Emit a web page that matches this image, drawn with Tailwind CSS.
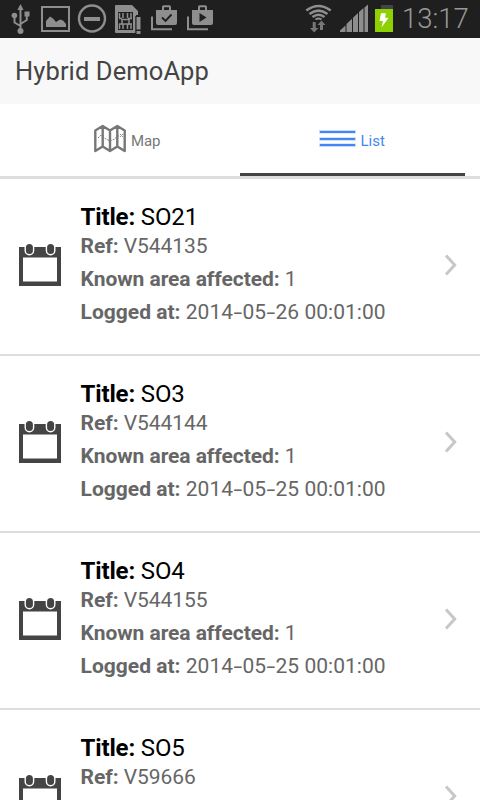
<!DOCTYPE html>
<html lang="en">
<head>
<meta charset="utf-8">
<title>Hybrid DemoApp</title>
<script src="https://cdn.jsdelivr.net/npm/@tailwindcss/browser@4"></script>
</head>
<body class="h-[800px] w-[480px] overflow-hidden bg-white font-['Roboto',sans-serif]">
<svg class="hidden">
  <symbol id="calendar" viewBox="0 0 42 43">
    <path fill="#444" fill-rule="evenodd" d="M0 4H42V43H0ZM4 14.500V38.500H38V14.500Z"/>
    <g fill="#444" stroke="#fff" stroke-width="1.400"><rect x="6.200" y=".4" width="8.400" height="11.400" rx="4.200"/><rect x="27.400" y=".4" width="8.400" height="11.400" rx="4.200"/></g>
  </symbol>
  <symbol id="chevron" viewBox="0 0 14 22"><path d="M2 1.500L10.700 11L2 20.500" fill="none" stroke="#c7c7c7" stroke-width="3"/></symbol>
</svg>

<div class="flex h-[38px] items-start bg-[#1f1f1f]">
  <svg class="h-[38px] w-[220px]" viewBox="0 0 220 38" fill="none" stroke="#8e8e8e">
    <g stroke-width="2"><path d="M20.500 9V31M20.500 26L14.500 22.500V17M20.500 24L26.800 20V15"/><g fill="#8e8e8e" stroke="none"><path d="M20.500 4L23.600 10H17.400Z"/><circle cx="14.400" cy="15.500" r="2.800"/><rect x="24.500" y="11.500" width="5" height="5"/><circle cx="20.500" cy="31" r="3"/></g></g>
    <rect x="42" y="7" width="27" height="24" stroke-width="2"/>
    <path fill="#8e8e8e" stroke="none" d="M46 27V21L50 16.500L53 18.500L56 22L60 19.500L63 20.500L66 24V27Z"/>
    <circle cx="92" cy="18.500" r="13" stroke-width="2.400"/><rect x="84" y="17" width="16" height="4" fill="#8e8e8e" stroke="none"/>
    <g stroke="none"><path fill="#8e8e8e" d="M116 5H132L138 11V15H136V33H116Q115 33 115 32V6Q115 5 116 5Z"/><rect x="118" y="12" width="15" height="18" fill="#1f1f1f"/><path stroke="#8e8e8e" stroke-width="1.500" d="M119.500 13V18M123 13V18M127.500 13V18M131 13V18M119.500 24V29M123 24V29M127.500 24V29M131 24V29M119 18.500H122M128 18.500H132M119 24H122M128 24H132"/><rect x="122" y="19.500" width="7" height="4.500" stroke="#8e8e8e" stroke-width="1.500"/><path stroke="#1f1f1f" stroke-width="1" d="M135.800 16V34"/><rect x="136.500" y="17" width="4" height="12.500" fill="#8e8e8e"/><rect x="136.500" y="31" width="4" height="3" fill="#8e8e8e"/></g>
    <g id="bag"><path stroke-width="2" d="M152 16.500V29.300H172M163 10V7Q163 6.300 163.700 6.300H169.300Q170 6.300 170 7V10"/><path fill="#8e8e8e" stroke="none" d="M156 10H177V23Q177 25 175 25H158Q156 25 156 23Z"/></g>
    <use href="#bag" x="36"/>
    <path stroke="#1f1f1f" stroke-width="1.900" d="M162 17.500L165.500 21L171.500 14.500"/><path fill="#1f1f1f" stroke="none" d="M199.500 13V22L206.500 17.500Z"/>
  </svg>
  <svg class="ml-auto h-[38px] w-[95px]" viewBox="302 0 95 38" fill="none" stroke="#8e8e8e">
    <g stroke-width="2.500"><path d="M306.300 10.500Q318.500 1.500 330.700 10.500M309.500 14Q318.500 7.200 327.500 14M312.500 17Q318.500 12.500 324.500 17"/><path stroke-width="2" d="M315.500 19.500Q318.500 17.500 321.500 19.500"/></g>
    <g fill="#777" stroke="none"><path d="M312.700 22H315.700V28H318.400L314.200 32.500L310 28H312.700ZM320 30V25H317.500L321.500 20.500L325.500 25H323V30Z"/></g>
    <path fill="#8e8e8e" stroke="none" d="M340 32V30.500L345.500 25.500V32ZM346.500 32V24L352 18.800V32ZM353 32V17.800L358 12.900V32ZM359 32V12L363.500 8V32ZM364.500 32V7.500L368 4.500V32Z"/>
    <g stroke="none"><rect x="381" y="5" width="12" height="4" fill="#444"/><rect x="375" y="9" width="18" height="23" fill="#8fd000"/><path fill="#fff" d="M381 13.300H386L385 17.500L388.500 18L381.500 27.500L383 21H379.500Z"/></g>
  </svg>
  <div class="w-[83px] pl-[5px] pt-[4px] text-[27.500px] leading-[30px] font-light whitespace-nowrap text-[#999]">13:17</div>
</div>

<header class="flex h-[66px] items-center bg-[#f8f8f8] pl-[15px]"><h1 class="text-[25.5px] font-normal tracking-[.1px] text-[#444]">Hybrid DemoApp</h1></header>

<nav class="flex h-[75px] border-b-[3px] border-[#ddd] pr-[15px]">
  <div class="flex w-[240px] pl-[94px] pt-[20px] text-[#777]">
    <svg class="h-[30px] w-[32px]" viewBox="0 0 32 30" fill="none" stroke="#777" stroke-width="2.400" stroke-linejoin="round"><path d="M1.300 6.500L8.700 2L16 6.500L23.300 2L30.700 6.500V27L23.300 22.500L16 27L8.700 22.500L1.300 27ZM8.700 2V22.500M16 6.500V27M23.300 2V22.500"/><path stroke-width=".9" stroke-dasharray="2 1" d="M4 14L7 11L12 15L16 17L21 15L23 12H26M26 10L29 13M29 10L26 13"/></svg>
    <span class="ml-[5px] mt-[7px] text-[15px] leading-[20px] tracking-[-.1px]">Map</span>
  </div>
  <div class="flex w-[225px] border-b-[3px] border-[#444] pl-[79px] pt-[25px] text-[#4387f4]">
    <svg class="h-[20px] w-[37px]" viewBox="0 0 37 20"><path d="M0 2.800H37M0 10H37M0 16.300H37" stroke="#c4daff" stroke-width="3.600"/><path d="M1 3H36M1 10H36M1 16H36" stroke="#4387f4" stroke-width="2"/></svg>
    <span class="ml-[4.500px] mt-[2px] text-[15px] leading-[20px]">List</span>
  </div>
</nav>

<main id="list"></main>
<script>
const jobs = [
  ["SO21", "V544135", "1", "2014-05-26 00:01:00"],
  ["SO3", "V544144", "1", "2014-05-25 00:01:00"],
  ["SO4", "V544155", "1", "2014-05-25 00:01:00"],
  ["SO5", "V59666"]
];
const dash = '<span class="inline-block w-[9.4px] text-center"><span class="inline-block scale-x-150">-</span></span>';
const field = (label, value, tracking = "tracking-[-.06px]") => value ? `<p class="text-[21px] leading-[33px] ${tracking}"><b class="font-bold">${label}:</b> ${value}</p>` : "";
document.getElementById("list").innerHTML = jobs.map(([title, ref, area, logged]) => `
  <article class="flex ${logged ? "h-[177px] border-b-2" : "h-[90px] overflow-hidden"} border-[#ddd] pl-[19px]">
    <svg class="mt-[64px] h-[43px] w-[42px] shrink-0"><use href="#calendar"/></svg>
    <div class="ml-[19.5px] w-[363px] pt-[23px] whitespace-nowrap text-[#666]">
      <h2 class="h-[28px] text-[24px] leading-[30px] font-normal tracking-[-.15px] text-black"><b class="font-bold">Title:</b> ${title}</h2>
      ${field("Ref", ref)}
      ${field("Known area affected", area)}
      ${field("Logged at", logged && logged.replaceAll("-", dash), "tracking-[.02px]")}
    </div>
    <svg class="mt-[75px] h-[22px] w-[14px] shrink-0"><use href="#chevron"/></svg>
  </article>`).join("");
</script>
</body>
</html>
